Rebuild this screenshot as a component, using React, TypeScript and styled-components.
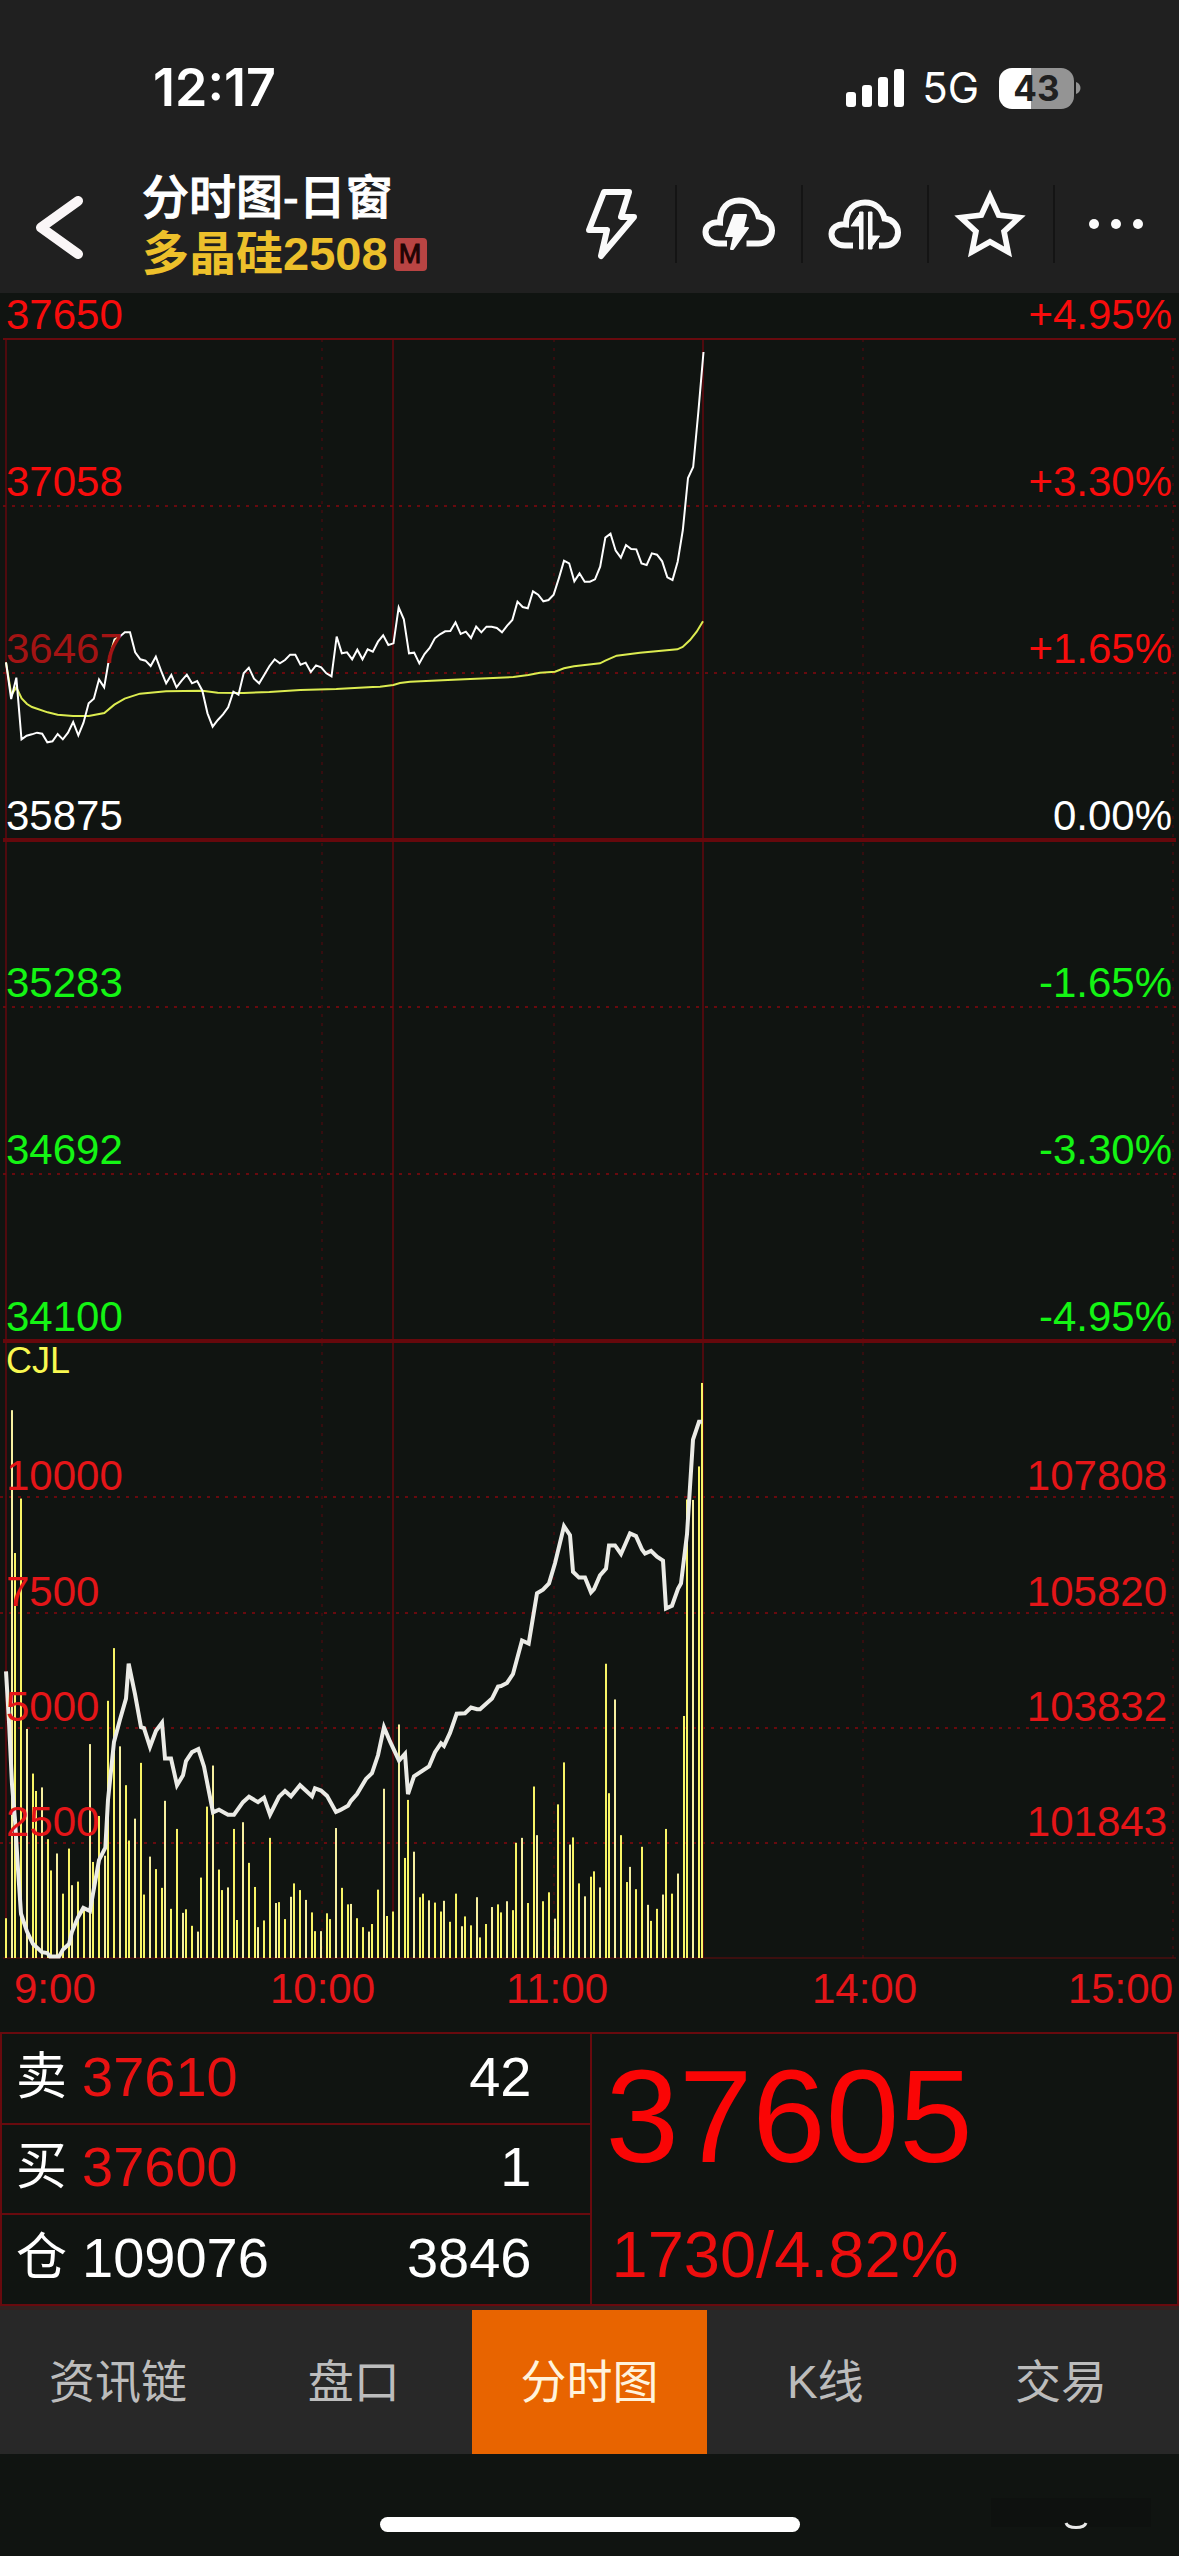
import React from "react";
import styled, { createGlobalStyle } from "styled-components";

const COLORS = {
  page: "#101411",
  bar: "#202020",
  tab: "#282828",
  red: "#f80c0c",
  dimRed: "#a31414",
  volRed: "#e41518",
  green: "#14f514",
  line: "#680a0e",
  faint: "#4e0a0e",
  white: "#ffffff",
  yellow: "#f8f850",
};

const FONT = '"Liberation Sans", Arial, "Noto Sans CJK SC", sans-serif';

const GlobalStyle = createGlobalStyle`
  *, *::before, *::after { box-sizing: border-box; }
  body { margin: 0; background: ${COLORS.page}; font-family: ${FONT}; color: ${COLORS.white}; }
  button { border: 0; padding: 0; background: none; color: inherit; font: inherit; cursor: pointer; }
`;

const Screen = styled.div`
  display: flex;
  flex-direction: column;
  min-height: 100vh;
  background: ${COLORS.page};
`;

/* ---------- status bar ---------- */

const StatusBar = styled.div`
  display: flex;
  align-items: center;
  justify-content: space-between;
  height: 170px;
  padding: 6px 98px 0 153px;
  background: ${COLORS.bar};
  font-family: Inter, sans-serif;
`;

const Clock = styled.span`
  font-size: 52px;
  font-weight: 600;
  line-height: 60px;
`;

const StatusIcons = styled.div`
  display: flex;
  align-items: center;
`;

const Network = styled.span`
  margin: 0 20px 0 17px;
  font-size: 42px;
  line-height: 48px;
`;

const Battery = styled.div<{ $level: number }>`
  width: 75px;
  height: 41px;
  margin-right: 2px;
  border-radius: 13px;
  background: linear-gradient(to right, #fff ${(p) => p.$level}%, #949494 ${(p) => p.$level}%);
  color: #202020;
  font-size: 35px;
  font-weight: 700;
  line-height: 41px;
  text-align: center;
`;

/* ---------- title bar ---------- */

const TitleBar = styled.header`
  display: flex;
  height: 123px;
  background: ${COLORS.bar};
`;

const BackButton = styled.button`
  display: flex;
  align-items: flex-start;
  width: 142px;
  padding: 25px 0 0 35px;
`;

const Titles = styled.div`
  flex: 1;
  min-width: 0;
  font-size: 47px;
  line-height: 56px;
  white-space: nowrap;
`;

const Title = styled.h1`
  margin: 0;
  font-size: inherit;
  font-weight: 500;
  -webkit-text-stroke: 1px currentColor;
`;

const Contract = styled.div`
  display: flex;
  align-items: center;
  gap: 6px;
  color: #edc02b;
  font-weight: 700;
`;

const Badge = styled.span`
  width: 33px;
  height: 33px;
  border-radius: 4px;
  background: #b94443;
  color: #200404;
  font-size: 27px;
  font-weight: 400;
  line-height: 33px;
  text-align: center;
  -webkit-text-stroke: 1px currentColor;
`;

const Tools = styled.div`
  display: flex;
  align-items: flex-start;
  padding-top: 15px;
`;

const ToolButton = styled.button`
  display: flex;
  align-items: center;
  justify-content: center;
  width: 126px;
  height: 78px;
  & + & {
    border-left: 2px solid #141414;
  }
`;

/* ---------- charts ---------- */

const Pane = styled.section<{ $rows: string }>`
  position: relative;
  display: grid;
  grid-template-rows: ${(p) => p.$rows};
`;

const Plot = styled.svg`
  position: absolute;
  inset: 0;
  width: 100%;
  height: 100%;
  overflow: visible;
`;

const LevelRow = styled.div<{ $color: string; $bottom: number; $right: number }>`
  position: relative;
  display: flex;
  justify-content: space-between;
  align-items: flex-end;
  padding: 0 ${(p) => p.$right}px ${(p) => p.$bottom}px 6px;
  color: ${(p) => p.$color};
  font-size: 42px;
  line-height: 42px;
`;

const LeftLevel = styled.span<{ $dim?: boolean }>`
  color: ${(p) => (p.$dim ? COLORS.dimRed : "inherit")};
`;

const FirstVolume = styled.div`
  position: relative;
  display: flex;
  flex-direction: column;
  justify-content: space-between;
  padding-top: 2px;
`;

const Indicator = styled.span`
  padding-left: 6px;
  color: ${COLORS.yellow};
  font-size: 36px;
  line-height: 36px;
`;

const TimeAxis = styled.div`
  display: grid;
  grid-template-columns: 206fr 233fr 236fr 379fr 125fr;
  height: 74px;
  padding-top: 10px;
  color: ${COLORS.volRed};
  font-size: 42px;
  line-height: 42px;
`;

const Tick = styled.span<{ $align: string }>`
  padding: ${(p) => (p.$align === "left" ? "0 0 0 14px" : p.$align === "right" ? "0 6px 0 0" : "0")};
  text-align: ${(p) => p.$align};
`;

/* ---------- quote panel ---------- */

const Quote = styled.section`
  display: grid;
  grid-template-columns: 1fr 1fr;
  height: 274px;
  border: 2px solid ${COLORS.line};
`;

const Book = styled.table`
  width: 100%;
  height: 100%;
  border-collapse: collapse;
  font-size: 56px;
  line-height: 64px;
`;

const BookRow = styled.tr`
  height: 90px;
  & + & {
    border-top: 2px solid ${COLORS.line};
  }
`;

const Side = styled.th`
  width: 80px;
  padding: 0 0 4px 14px;
  font-size: 51px;
  font-weight: 400;
  text-align: left;
`;

const Price = styled.td<{ $up?: boolean }>`
  padding: 0 0 4px;
  color: ${(p) => (p.$up ? "#e81212" : COLORS.white)};
`;

const Amount = styled.td`
  padding: 0 58px 4px 0;
  text-align: right;
`;

const Last = styled.div`
  display: flex;
  flex-direction: column;
  padding: 17px 0 0 14px;
  border-left: 2px solid ${COLORS.line};
  color: #fa0505;
`;

const LastPrice = styled.strong`
  font-size: 132px;
  font-weight: 400;
  line-height: 132px;
`;

const Change = styled.span`
  margin-top: 39px;
  padding-left: 6px;
  color: #ee0e0e;
  font-size: 65px;
  line-height: 65px;
`;

/* ---------- bottom ---------- */

const Tabs = styled.nav`
  display: grid;
  grid-template-columns: repeat(5, 1fr);
  height: 148px;
  border-top: 4px solid #33201f;
  background: ${COLORS.tab};
`;

const Tab = styled.button<{ $active: boolean }>`
  background: ${(p) => (p.$active ? "#e86400" : "transparent")};
  color: ${(p) => (p.$active ? "#fff3dc" : "#bcbcbc")};
  font-size: 46px;
  line-height: 56px;
`;

const Footer = styled.footer`
  display: grid;
  grid-template-columns: 1fr 420px 1fr;
  padding-top: 44px;
`;

const HomeBar = styled.div`
  grid-column: 2;
  height: 15px;
  margin-top: 19px;
  border-radius: 8px;
  background: #fff;
`;

const Smudge = styled.div`
  display: flex;
  justify-content: flex-end;
  padding-right: 28px;
`;

/* ---------- data ---------- */

const STEP = 31 / 6;
const minuteX = (i: number) => 6 + i * STEP;

const priceEarly = [
  247, 357, 293, 478, 467, 463, 458, 461, 487, 484, 462, 478, 458, 426, 466, 428, 370, 356, 298, 322,
  232, 178, 170, 157, 157, 217, 238, 242, 258, 230, 272, 310, 285, 322, 302, 284, 310, 303, 332, 400,
  440, 420, 403, 382, 335, 344, 280, 263, 296, 310, 284, 258, 238, 250, 240, 224, 224, 254, 248, 276,
  256, 262, 280, 289, 170, 220, 217, 238, 209, 238, 208, 215, 185, 166, 195, 190,
];
const priceLate = [
  322, 358, 460, 458, 490, 462, 444, 415, 403, 394, 393, 367, 402, 395, 414, 380, 397, 380, 380, 384,
  397, 377, 360, 305, 321, 325, 274, 284, 304, 300, 284, 235, 182, 190, 244, 220, 245, 245, 238, 200,
  113, 101, 152, 173, 135, 147, 148, 190, 195, 160, 164, 184, 232, 240, 185, 90, -66, -99, -264, -444,
];

const pricePoints = [...priceEarly.map((v) => 287 + v / 3), ...priceLate.map((v) => 207 + v / 3)]
  .map((y, i) => `${minuteX(i)},${y}`)
  .join(" ");

type Pair = [number, number];

const trace = (pairs: Pair[], left: number, top: number, yScale: number) =>
  pairs.map(([x, y]) => `${left + x / 3},${top + y / yScale}`).join(" ");

const averagePoints =
  trace(
    [[18, 247], [34, 345], [49, 322], [65, 355], [81, 372], [96, 381], [143, 397], [173, 404], [219, 408],
     [266, 408], [313, 399], [343, 374], [374, 356], [420, 341], [498, 334], [607, 332], [653, 338],
     [731, 339], [808, 336], [901, 330], [1009, 327], [1118, 321]],
    0, 287, 3,
  ) +
  " " +
  trace(
    [[0, 560], [40, 555], [60, 549], [90, 545], [220, 539], [400, 531], [445, 525], [480, 518], [525, 515],
     [552, 505], [582, 499], [660, 490], [676, 482], [710, 467], [780, 458], [892, 448], [908, 441],
     [930, 420], [950, 395], [969, 364]],
    380, 207, 3,
  );

const volumeTops = [
  1340, 202, 522, 400, 916, 1016, 1055, 1047, 1163, 1233, 1195, 1285, 1184, 1266, 1258, 1320, 950,
  1214, 1111, 1200, 853, 735, 955, 1042, 1166, 1117, 992, 1287, 1202, 1230, 1272, 1077, 1319, 1140, 1328,
  1320, 1357, 1370, 1249, 1090, 998, 1231, 1277, 1271, 1140, 1344, 1125, 1216, 1270, 1360, 1345, 1160,
  1306, 1304, 1342, 1292, 1262, 1277, 1299, 1327, 1369, 1369, 1329, 1342, 1138, 1272, 1309, 1308, 1340,
  1360, 1370, 1353, 1276, 1050, 1335, 1325, 906, 1205, 1075, 1191, 1293, 1285, 1300, 1305, 1325, 1301,
  1348, 1285, 1358, 1336, 1356, 1293, 1383, 1353, 1315, 1309, 1327, 1302, 1322, 1171, 1160, 1306, 1045,
  1154, 1302, 1282, 1341, 1085, 991, 1175, 1159, 1262, 1291, 1247, 1235, 1271, 770, 1060, 850, 1154,
  1259, 1225, 1275, 1180, 1310, 1346, 1319, 1287, 1140, 1285, 1240, 887, 402, 403, 328, 141,
];

const interestPoints =
  trace(
    [[18, 787], [27, 900], [36, 1040], [45, 1120], [54, 1230], [63, 1330], [81, 1370], [99, 1398], [126, 1416],
     [142, 1418], [150, 1426], [177, 1426], [189, 1410], [207, 1398], [216, 1370], [234, 1338], [250, 1317],
     [270, 1324], [279, 1285], [297, 1210], [316, 1182], [324, 1075], [342, 945], [360, 895], [378, 848],
     [386, 770], [405, 838], [423, 912], [432, 914], [450, 956], [468, 920], [486, 902], [495, 982],
     [513, 982], [531, 1042], [549, 1020], [558, 988], [576, 968], [595, 961], [612, 1000], [639, 1103],
     [657, 1097], [684, 1108], [702, 1108], [729, 1080], [747, 1068], [774, 1080], [792, 1070], [810, 1108],
     [837, 1068], [855, 1055], [873, 1067], [900, 1042], [936, 1067], [945, 1049], [963, 1054], [981, 1066],
     [1008, 1102]],
    0, -21, 2.24,
  ) +
  " " +
  trace(
    [[0, 1098], [24, 1088], [33, 1077], [51, 1062], [78, 1028], [96, 1015], [114, 975], [132, 912], [150, 944],
     [177, 987], [195, 972], [204, 1062], [222, 1022], [267, 1000], [285, 968], [303, 948], [312, 954],
     [330, 925], [350, 882], [375, 881], [393, 868], [411, 872], [420, 872], [456, 848], [474, 821],
     [483, 820], [501, 813], [519, 793], [546, 718], [566, 725], [591, 612], [609, 604], [627, 590],
     [645, 545], [672, 462], [690, 482], [699, 564], [717, 577], [735, 577], [753, 610], [762, 603],
     [780, 572], [798, 557], [807, 505], [825, 505], [843, 524], [870, 478], [888, 484], [906, 514],
     [915, 523], [933, 517], [951, 530], [969, 539], [978, 646], [996, 640], [1014, 602], [1023, 590],
     [1041, 480], [1059, 268], [1077, 228], [1086, 228]],
    340, -21, 2.24,
  );

const priceLevels = [
  { price: "37650", change: "+4.95%", color: COLORS.red },
  { price: "37058", change: "+3.30%", color: COLORS.red },
  { price: "36467", change: "+1.65%", color: COLORS.red, dim: true },
  { price: "35875", change: "0.00%", color: COLORS.white },
  { price: "35283", change: "-1.65%", color: COLORS.green },
  { price: "34692", change: "-3.30%", color: COLORS.green },
  { price: "34100", change: "-4.95%", color: COLORS.green },
];

const volumeLevels = [
  ["10000", "107808"],
  ["7500", "105820"],
  ["5000", "103832"],
  ["2500", "101843"],
];

const ticks = [
  ["9:00", "left"],
  ["10:00", "center"],
  ["11:00", "center"],
  ["14:00", "center"],
  ["15:00", "right"],
];

const book = [
  { side: "卖", price: "37610", amount: "42", up: true },
  { side: "买", price: "37600", amount: "1", up: true },
  { side: "仓", price: "109076", amount: "3846", up: false },
];

const tabs = ["资讯链", "盘口", "分时图", "K线", "交易"];

/* ---------- drawings ---------- */

const TimeLines = ({ top, bottom }: { top: number; bottom: number }) => (
  <g stroke={COLORS.faint} strokeWidth="2">
    <path d={`M6 ${top}V${bottom}M393 ${top}V${bottom}M703 ${top}V${bottom}`} />
    <path
      d={`M322 ${top}V${bottom}M554 ${top}V${bottom}M863 ${top}V${bottom}M1173 ${top}V${bottom}`}
      strokeDasharray="3 6"
      opacity="0.6"
    />
  </g>
);

const PricePlot = () => (
  <Plot viewBox="0 0 1179 1048" preserveAspectRatio="none" aria-hidden="true">
    <TimeLines top={46} bottom={1048} />
    <path d="M3 46H1176" stroke={COLORS.line} strokeWidth="2" />
    <path
      d="M3 213H1176M3 380H1176M3 714H1176M3 881H1176"
      stroke={COLORS.line}
      strokeWidth="2"
      strokeDasharray="3 6"
    />
    <path d="M3 547H1176M3 1048H1176" stroke="#66080c" strokeWidth="4" />
    <polyline points={averagePoints} fill="none" stroke="#dcec50" strokeWidth="2" />
    <polyline points={pricePoints} fill="none" stroke="#fff" strokeWidth="2" />
  </Plot>
);

const VolumePlot = () => (
  <Plot viewBox="0 0 1179 617" preserveAspectRatio="none" aria-hidden="true">
    <TimeLines top={2} bottom={617} />
    <path
      d="M0 156H1176M0 272H1176M0 387H1176M0 502H1176"
      stroke={COLORS.line}
      strokeWidth="2"
      strokeDasharray="3 6"
    />
    <path d="M3 617H1176" stroke={COLORS.line} strokeWidth="1" />
    {volumeTops.map((v, i) => {
      const top = v / 2.24 - 21;
      return (
        <rect
          key={i}
          x={3 * Math.round((minuteX(i) - 0.1) / 3) - 1}
          y={top}
          width="2"
          height={617 - top}
          fill={i % 3 === 1 ? "#f6efa0" : "#f8f466"}
        />
      );
    })}
    <polyline points={interestPoints} fill="none" stroke="#ebebe6" strokeWidth="4" />
  </Plot>
);

const star = (outer: number, inner: number) =>
  Array.from({ length: 10 }, (_, i) => {
    const r = i % 2 ? inner : outer;
    const a = (Math.PI * i) / 5 - Math.PI / 2;
    return `${i ? "L" : "M"}${38 + r * Math.cos(a)} ${42 + r * Math.sin(a)}`;
  }).join("") + "Z";

const CLOUD =
  "M28 61.5H20C12 61.5 6.500 56.500 6.500 50C6.500 44 12 39.500 21 40.500C21 26 29 18.500 40 18.500C50 18.500 57 24.500 59.500 34.500C68 35.500 73 41.500 73 48.500C73 56 67.500 61.500 59.500 61.500H";

const BoltIcon = () => (
  <svg width="78" height="78" viewBox="0 0 78 78" fill="none" stroke="#fafafa" strokeWidth="6" strokeLinejoin="round">
    <path d="M31 7H56L48 32H61L28 71L34 45H16Z" />
  </svg>
);

const CloudBoltIcon = () => (
  <svg width="80" height="78" viewBox="0 3 80 78" fill="none">
    <path d={CLOUD + "47.500"} stroke="#fafafa" strokeWidth="6" />
    <path
      d="M35 33H47L44 46H49L34 67H32L35 54H27Z"
      fill="#fafafa"
      stroke="#fafafa"
      strokeWidth="2"
      strokeLinejoin="round"
    />
  </svg>
);

const CloudArrowsIcon = () => (
  <svg width="80" height="78" viewBox="0 1 80 78" fill="none">
    <path d={CLOUD + "54"} stroke="#fafafa" strokeWidth="6" />
    <path
      d="M34.500 28V65H38V28ZM36 28L26 42H34.500ZM43.500 28V65H47V28ZM45 65L54.500 52H47Z"
      fill="#fafafa"
      stroke="#fafafa"
      strokeWidth="1"
      strokeLinejoin="round"
    />
  </svg>
);

const StarIcon = () => (
  <svg width="78" height="78" viewBox="0 0 78 78">
    <path d={star(37.5, 18) + star(24, 11.5)} fill="#fafafa" fillRule="evenodd" />
  </svg>
);

const MoreIcon = () => (
  <svg width="78" height="78" viewBox="0 0 78 78" fill="#fafafa">
    <circle cx="16" cy="39" r="5" />
    <circle cx="38" cy="39" r="5" />
    <circle cx="60" cy="39" r="5" />
  </svg>
);

const tools = [
  { name: "闪电下单", icon: <BoltIcon /> },
  { name: "云条件单", icon: <CloudBoltIcon /> },
  { name: "云同步", icon: <CloudArrowsIcon /> },
  { name: "自选", icon: <StarIcon /> },
  { name: "更多", icon: <MoreIcon /> },
];

export default function App() {
  const [active, setActive] = React.useState("分时图");

  return (
    <Screen>
      <GlobalStyle />
      <StatusBar>
        <Clock>12:17</Clock>
        <StatusIcons>
          <svg width="59" height="38" viewBox="0 0 59 38" fill="#fff" aria-hidden="true">
            <rect x="0" y="23" width="10" height="15" rx="3" />
            <rect x="16" y="16" width="10" height="22" rx="3" />
            <rect x="32" y="8" width="10" height="30" rx="3" />
            <rect x="48" y="0" width="10" height="38" rx="3" />
          </svg>
          <Network>5G</Network>
          <Battery $level={43}>43</Battery>
          <svg width="5" height="12" viewBox="0 0 5 12" fill="#949494" aria-hidden="true">
            <path d="M0 0C6 2 6 10 0 12Z" />
          </svg>
        </StatusIcons>
      </StatusBar>

      <TitleBar>
        <BackButton aria-label="返回">
          <svg width="50" height="66" viewBox="0 0 50 66" fill="none" stroke="#faf6f7" strokeWidth="10" strokeLinecap="round" strokeLinejoin="round">
            <path d="M43 6L6 32.500L43 59" />
          </svg>
        </BackButton>
        <Titles>
          <Title>分时图-日窗</Title>
          <Contract>
            多晶硅2508<Badge>M</Badge>
          </Contract>
        </Titles>
        <Tools>
          {tools.map((t) => (
            <ToolButton key={t.name} aria-label={t.name}>
              {t.icon}
            </ToolButton>
          ))}
        </Tools>
      </TitleBar>

      <Pane $rows="46px repeat(6, 167px)">
        <PricePlot />
        {priceLevels.map((l) => (
          <LevelRow key={l.price} $color={l.color} $bottom={3} $right={7}>
            <LeftLevel $dim={l.dim}>{l.price}</LeftLevel>
            <span>{l.change}</span>
          </LevelRow>
        ))}
      </Pane>

      <Pane $rows="156px 116px 115px 115px 115px">
        <VolumePlot />
        {volumeLevels.map(([volume, interest], i) => {
          const row = (
            <LevelRow key={volume} $color={COLORS.volRed} $bottom={0} $right={12}>
              <span>{volume}</span>
              <span>{interest}</span>
            </LevelRow>
          );
          return i === 0 ? (
            <FirstVolume key={volume}>
              <Indicator>CJL</Indicator>
              {row}
            </FirstVolume>
          ) : (
            row
          );
        })}
      </Pane>

      <TimeAxis>
        {ticks.map(([time, align]) => (
          <Tick key={time} $align={align}>
            {time}
          </Tick>
        ))}
      </TimeAxis>

      <Quote>
        <Book>
          <tbody>
            {book.map((b) => (
              <BookRow key={b.side}>
                <Side scope="row">{b.side}</Side>
                <Price $up={b.up}>{b.price}</Price>
                <Amount>{b.amount}</Amount>
              </BookRow>
            ))}
          </tbody>
        </Book>
        <Last>
          <LastPrice>37605</LastPrice>
          <Change>1730/4.82%</Change>
        </Last>
      </Quote>

      <Tabs>
        {tabs.map((t) => (
          <Tab key={t} $active={t === active} onClick={() => setActive(t)}>
            {t}
          </Tab>
        ))}
      </Tabs>

      <Footer>
        <HomeBar />
        <Smudge>
          <svg width="160" height="32" viewBox="0 0 160 32" fill="none" aria-hidden="true">
            <rect width="160" height="29" fill="#0e110f" />
            <path d="M75 25C77 31 93 31 95 25" stroke="#e8e8e8" strokeWidth="3" />
          </svg>
        </Smudge>
      </Footer>
    </Screen>
  );
}
